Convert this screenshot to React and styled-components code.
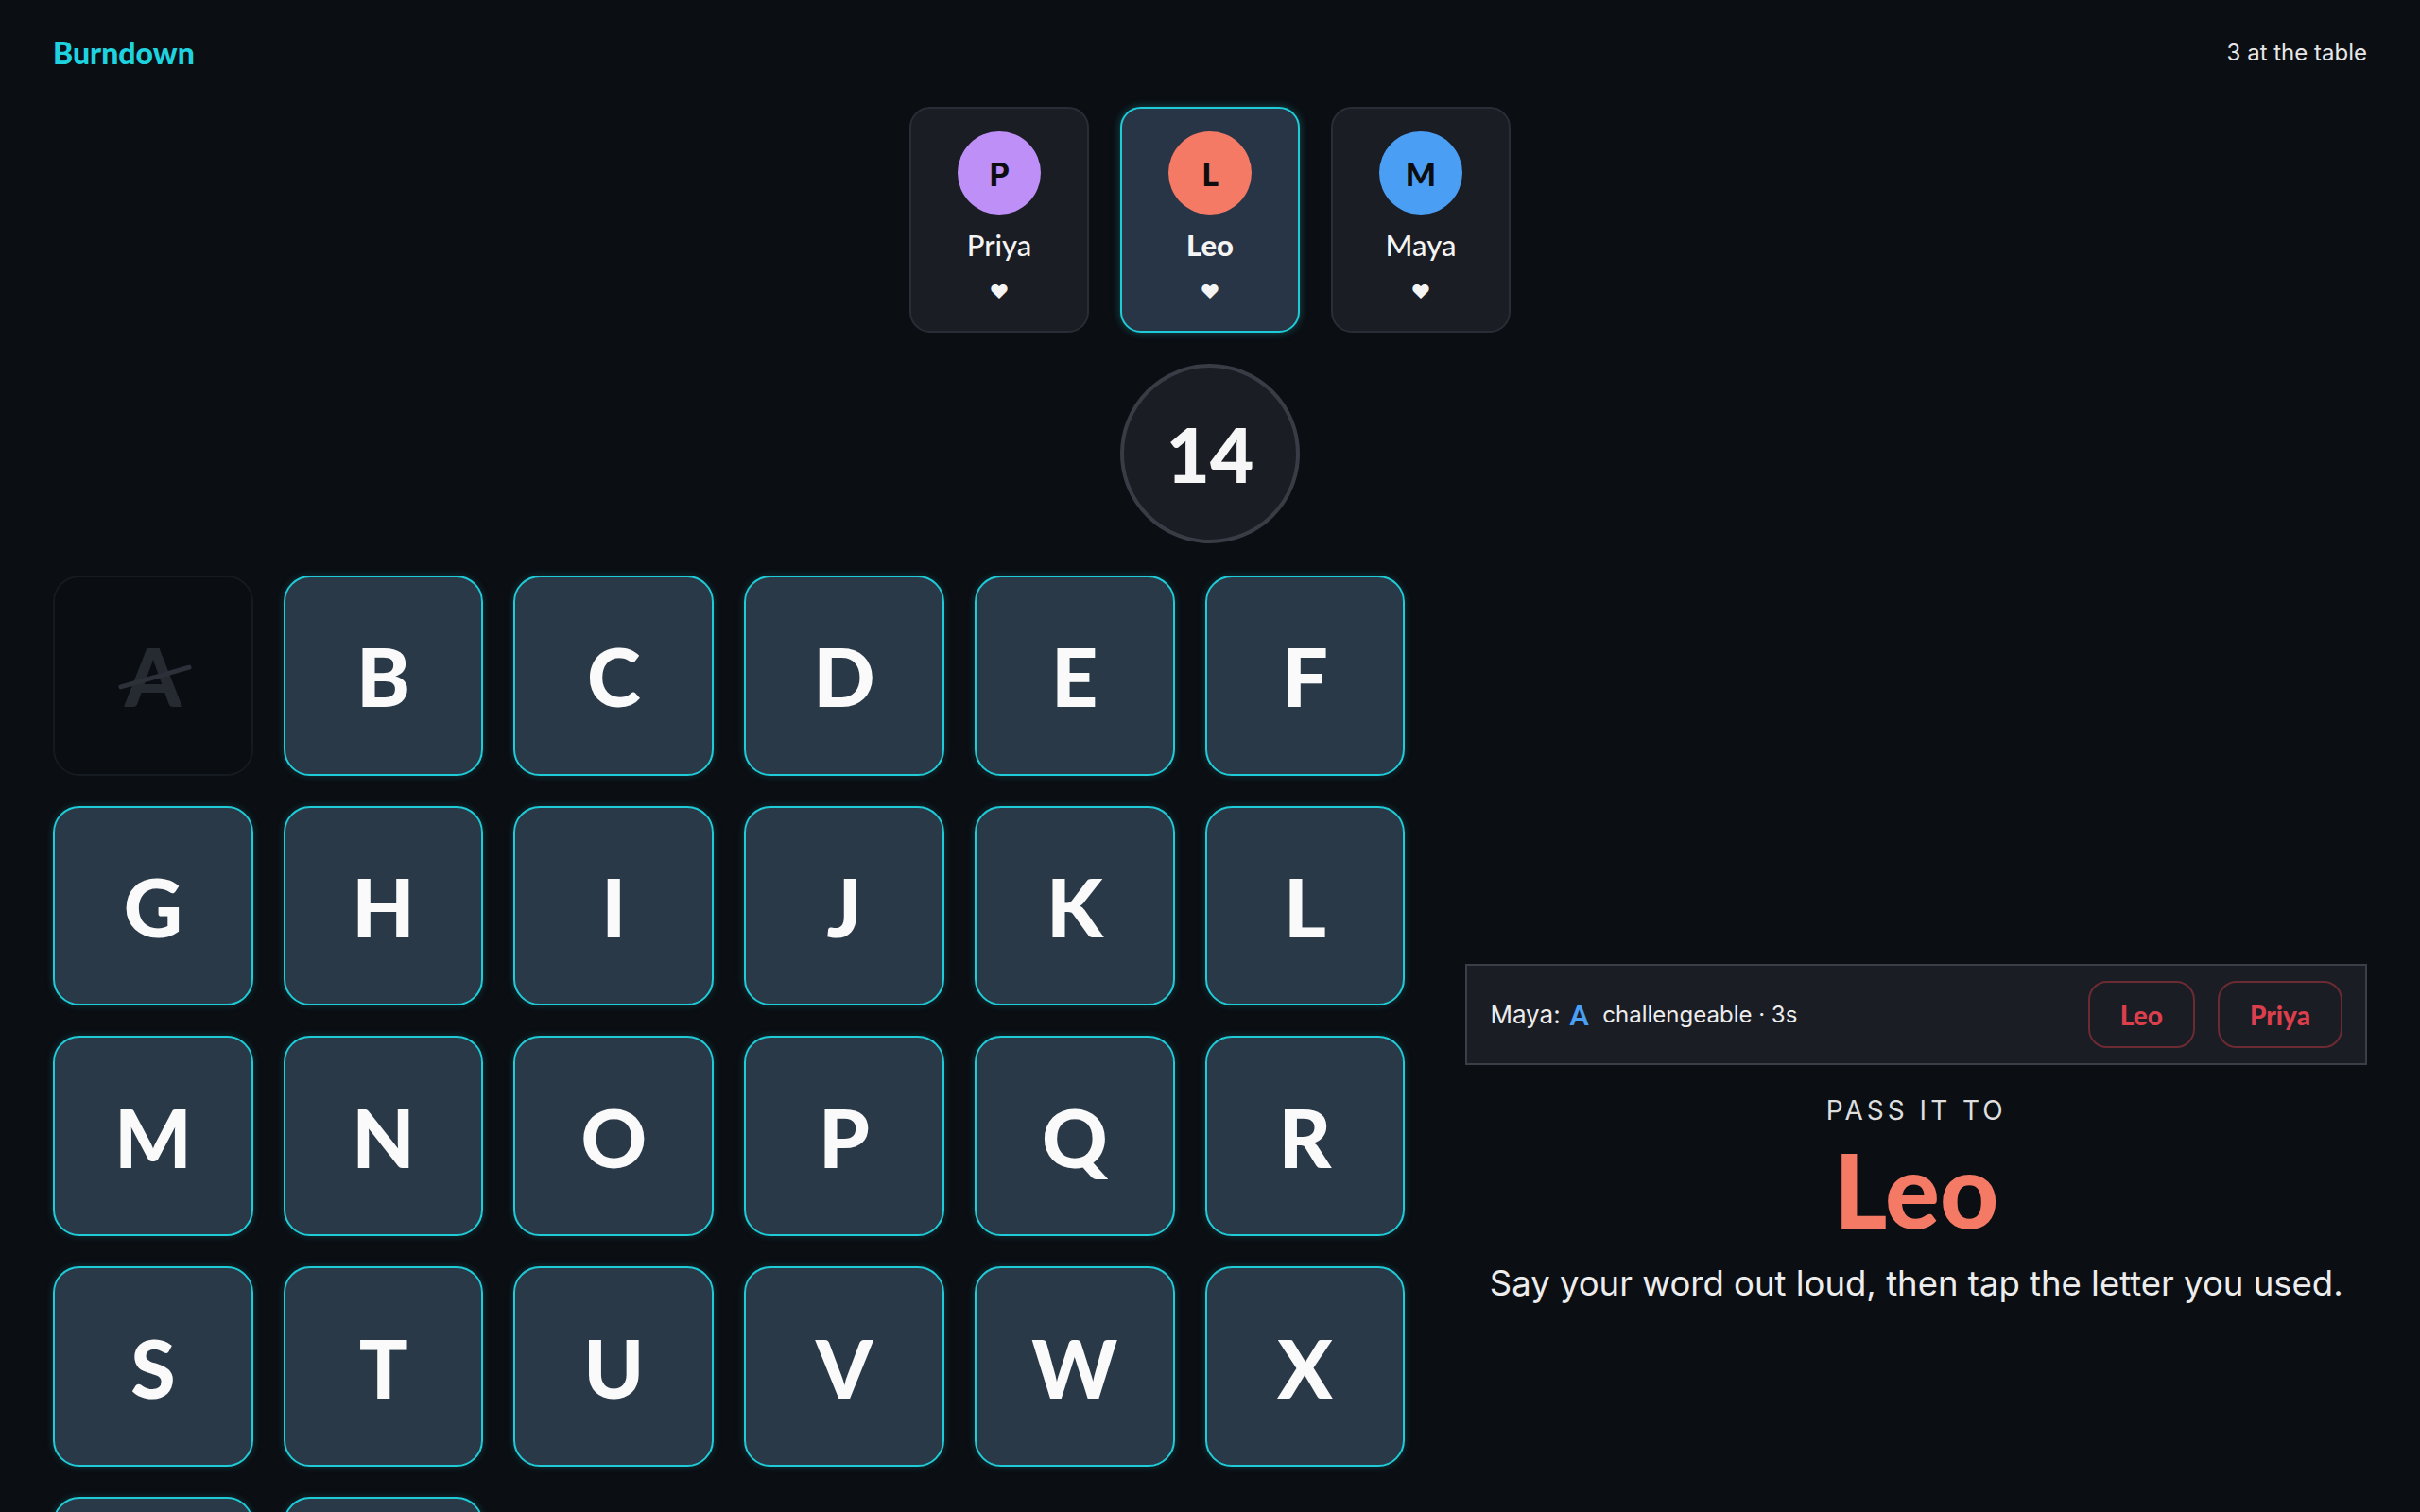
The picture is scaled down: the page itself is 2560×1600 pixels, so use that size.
import React from "react";
import styled, { createGlobalStyle } from "styled-components";

const GlobalStyle = createGlobalStyle`
  html, body {
    margin: 0;
    padding: 0;
    background: #0b0e13;
    color: #ececec;
    font-family: Inter, "Noto Sans", sans-serif;
  }
  * {
    box-sizing: border-box;
  }
`;

const display = `Lato, Inter, "Noto Sans", sans-serif`;

const Page = styled.div`
  min-height: 100vh;
  padding: 37px 56px 0;
  overflow: hidden;
`;

const Header = styled.header`
  display: flex;
  justify-content: space-between;
  align-items: center;
  height: 36px;
`;

const Logo = styled.div`
  font-family: ${display};
  font-weight: 900;
  font-size: 32px;
  color: #1ed3df;
`;

const TableCount = styled.div`
  font-size: 24px;
  color: #e6e6e6;
`;

const Players = styled.div`
  display: flex;
  justify-content: center;
  gap: 33px;
  margin-top: 40px;
`;

const PlayerCard = styled.div`
  width: 190px;
  height: 239px;
  padding-top: 24px;
  display: flex;
  flex-direction: column;
  align-items: center;
  border-radius: 22px;
  background: ${(p) => (p.$active ? "#283546" : "#1a1d24")};
  border: 2px solid ${(p) => (p.$active ? "#1fcbd6" : "#2a2d35")};
  box-shadow: ${(p) =>
    p.$active ? "0 0 10px rgba(31, 203, 214, 0.35)" : "none"};
`;

const Avatar = styled.div`
  width: 88px;
  height: 88px;
  border-radius: 50%;
  background: ${(p) => p.$color};
  display: flex;
  align-items: center;
  justify-content: center;
  font-family: ${display};
  font-weight: 900;
  font-size: 34px;
  color: #0d0d0f;
`;

const PlayerName = styled.div`
  margin-top: 14px;
  font-family: ${display};
  font-weight: ${(p) => (p.$active ? 900 : 500)};
  font-size: 31px;
  line-height: 36px;
  color: #f4f4f4;
`;

const Heart = styled.div`
  margin-top: 21px;
  font-size: 20px;
  line-height: 22px;
  color: #f4f4f4;
`;

const Timer = styled.div`
  width: 190px;
  height: 190px;
  margin: 33px auto 34px;
  border-radius: 50%;
  border: 4px solid #393c44;
  background: #1a1d24;
  display: flex;
  align-items: center;
  justify-content: center;
  font-family: ${display};
  font-weight: 900;
  font-size: 80px;
  color: #f6f6f6;
`;

const Main = styled.main`
  display: grid;
  grid-template-columns: 3fr 2fr;
  gap: 64px;
`;

const LetterGrid = styled.div`
  display: grid;
  grid-template-columns: repeat(6, 1fr);
  gap: 32px;
`;

const Tile = styled.button`
  position: relative;
  aspect-ratio: 1;
  border-radius: 28px;
  display: flex;
  align-items: center;
  justify-content: center;
  font-family: ${display};
  font-weight: 900;
  font-size: 86px;
  padding: 0;
  cursor: pointer;
  background: ${(p) => (p.$used ? "#0a0d12" : "#2a3948")};
  border: 2px solid ${(p) => (p.$used ? "#161a21" : "#1fcbd6")};
  color: ${(p) => (p.$used ? "#262a31" : "#fafafa")};
  box-shadow: ${(p) =>
    p.$used ? "none" : "0 0 8px rgba(31, 203, 214, 0.22)"};

  ${(p) =>
    p.$used &&
    `
    &::after {
      content: "";
      position: absolute;
      left: 66px;
      top: 103px;
      width: 80px;
      height: 5px;
      border-radius: 3px;
      background: #2c3038;
      transform: rotate(-16deg);
    }
  `}
`;

const Side = styled.section`
  align-self: center;
  display: flex;
  flex-direction: column;
  align-items: center;
  text-align: center;
`;

const Challenge = styled.div`
  width: 100%;
  height: 107px;
  padding: 0 24px;
  display: flex;
  align-items: center;
  justify-content: space-between;
  background: #1b1d24;
  border: 2px solid #3a3e47;
`;

const ChallengeText = styled.div`
  display: flex;
  align-items: center;
  font-size: 26px;
  color: #ececec;
`;

const ChallengeLetter = styled.span`
  font-family: ${display};
  font-weight: 900;
  font-size: 28px;
  color: #4aa0f5;
  margin: 0 15px 0 10px;
`;

const ChallengeMeta = styled.span`
  font-size: 24px;
`;

const ChallengeButtons = styled.div`
  display: flex;
  gap: 24px;
`;

const ChallengeButton = styled.button`
  height: 71px;
  padding: 0 32px;
  border-radius: 20px;
  background: transparent;
  border: 2px solid #6c2a33;
  color: #db3f4c;
  font-family: ${display};
  font-weight: 900;
  font-size: 28px;
  cursor: pointer;
`;

const PassLabel = styled.div`
  margin-top: 32px;
  font-size: 28px;
  line-height: 1.2;
  letter-spacing: 4px;
  color: #dedede;
`;

const NextName = styled.div`
  margin-top: 6px;
  font-family: ${display};
  font-weight: 900;
  font-size: 108px;
  line-height: 1.1;
  color: ${(p) => p.$color};
`;

const Hint = styled.p`
  margin: 16px 0 0;
  font-size: 36.5px;
  line-height: 1.4;
  color: #ededed;
`;

const players = [
  { name: "Priya", color: "#bf8ff8" },
  { name: "Leo", color: "#f47a66", active: true },
  { name: "Maya", color: "#4a9ff5" },
];

const letters = "ABCDEFGHIJKLMNOPQRSTUVWXYZ".split("");
const used = ["A"];

export default function App() {
  return (
    <Page>
      <GlobalStyle />
      <Header>
        <Logo>Burndown</Logo>
        <TableCount>3 at the table</TableCount>
      </Header>

      <Players>
        {players.map((p) => (
          <PlayerCard key={p.name} $active={p.active}>
            <Avatar $color={p.color}>{p.name[0]}</Avatar>
            <PlayerName $active={p.active}>{p.name}</PlayerName>
            <Heart>♥</Heart>
          </PlayerCard>
        ))}
      </Players>

      <Timer>14</Timer>

      <Main>
        <LetterGrid>
          {letters.map((l) => (
            <Tile key={l} $used={used.includes(l)}>
              {l}
            </Tile>
          ))}
        </LetterGrid>

        <Side>
          <Challenge>
            <ChallengeText>
              Maya:
              <ChallengeLetter>A</ChallengeLetter>
              <ChallengeMeta>challengeable · 3s</ChallengeMeta>
            </ChallengeText>
            <ChallengeButtons>
              <ChallengeButton>Leo</ChallengeButton>
              <ChallengeButton>Priya</ChallengeButton>
            </ChallengeButtons>
          </Challenge>
          <PassLabel>PASS IT TO</PassLabel>
          <NextName $color="#f47a66">Leo</NextName>
          <Hint>Say your word out loud, then tap the letter you used.</Hint>
        </Side>
      </Main>
    </Page>
  );
}
